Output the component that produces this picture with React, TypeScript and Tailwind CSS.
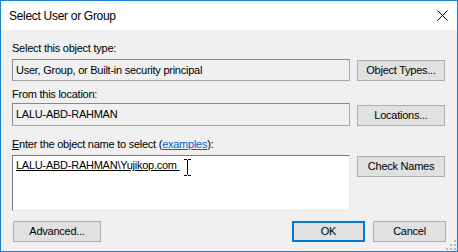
const font = { fontFamily: '"Liberation Sans", Arial, sans-serif' }

function WinButton({ label, className = '' }: { label: string; className?: string }) {
  return (
    <button
      className={`flex h-[21px] items-center justify-center border border-[#adadad] bg-[#e1e1e1] text-[11px] leading-[13px] tracking-[-0.25px] text-black ${className}`}
    >
      {label}
    </button>
  )
}

function CloseIcon() {
  return (
    <svg width="11" height="11" viewBox="0 0 11 11" className="block">
      <path d="M0.5 0.5 L10.5 10.5 M10.5 0.5 L0.5 10.5" stroke="#000" strokeWidth="1" />
    </svg>
  )
}

function IBeam() {
  return (
    <svg width="9" height="17" viewBox="0 0 9 17" className="block">
      <path d="M1 0.5 H4 M5 0.5 H8 M4.5 1 V16 M1 16.5 H4 M5 16.5 H8" stroke="#000" strokeWidth="1" />
    </svg>
  )
}

function SizeGrip() {
  return (
    <svg width="10" height="10" viewBox="0 0 10 10" className="block">
      <rect x="8" y="0" width="2" height="2" fill="#bcbcbc" />
      <rect x="4" y="4" width="2" height="2" fill="#bcbcbc" />
      <rect x="8" y="4" width="2" height="2" fill="#bcbcbc" />
      <rect x="0" y="8" width="2" height="2" fill="#bcbcbc" />
      <rect x="4" y="8" width="2" height="2" fill="#bcbcbc" />
      <rect x="8" y="8" width="2" height="2" fill="#bcbcbc" />
    </svg>
  )
}

export default function App() {
  return (
    <div
      style={font}
      className="relative flex h-[252px] w-[458px] flex-col border border-[#1a7fd4] bg-[#f0f0f0] text-black"
    >
      {/* title bar */}
      <div className="flex h-[29px] items-center justify-between bg-white pl-[8px] pr-[9px]">
        <span className="text-[12px] leading-[16px] tracking-[-0.3px]">Select User or Group</span>
        <CloseIcon />
      </div>

      <div className="flex flex-1 flex-col pl-[11px] pr-[11px] pt-[12px] text-[11px] leading-[13px] tracking-[-0.25px]">
        <div className="h-[13px]">Select this object type:</div>
        <div className="mt-[4px] flex items-start gap-[7px]">
          <div className="flex h-[22px] w-[338px] items-center border border-[#8a8a8a] border-b-[#a8a8a8] border-r-[#a8a8a8] pl-[3px]">
            User, Group, or Built-in security principal
          </div>
          <WinButton label="Object Types..." className="mt-[1px] w-[88px]" />
        </div>

        <div className="mt-[7px] h-[13px]">From this location:</div>
        <div className="mt-[2px] flex items-start gap-[7px]">
          <div className="flex h-[23px] w-[338px] items-center border border-[#8a8a8a] border-b-[#a8a8a8] border-r-[#a8a8a8] pl-[3px]">
            LALU-ABD-RAHMAN
          </div>
          <WinButton label="Locations..." className="mt-[2px] w-[88px]" />
        </div>

        <div className="mt-[12px] h-[13px]">
          <span className="underline">E</span>nter the object name to select (
          <span className="text-[#0066cc] underline">examples</span>):
        </div>
        <div className="mt-[4px] flex items-start gap-[7px]">
          <div className="relative h-[56px] w-[338px] border border-[#7a7a7a] border-b-[#e3e3e3] border-r-[#e3e3e3] bg-white pl-[3px] pt-[3px]">
            <span className="whitespace-pre underline">LALU-ABD-RAHMAN\Yujikop.com </span>
            <div className="absolute left-[170px] top-[3px]">
              <IBeam />
            </div>
          </div>
          <WinButton label="Check Names" className="mt-[1px] w-[88px]" />
        </div>

        <div className="mt-[10px] flex items-start">
          <WinButton label="Advanced..." className="ml-[1px] w-[88px]" />
          <div className="ml-auto flex gap-[8px]">
            <button className="flex h-[21px] w-[73px] items-center justify-center border-2 border-[#0078d7] bg-[#e1e1e1] text-[11px] leading-[13px] text-black">
              OK
            </button>
            <WinButton label="Cancel" className="w-[73px]" />
          </div>
        </div>
      </div>

      <div className="absolute bottom-[1px] right-[1px]">
        <SizeGrip />
      </div>
    </div>
  )
}
